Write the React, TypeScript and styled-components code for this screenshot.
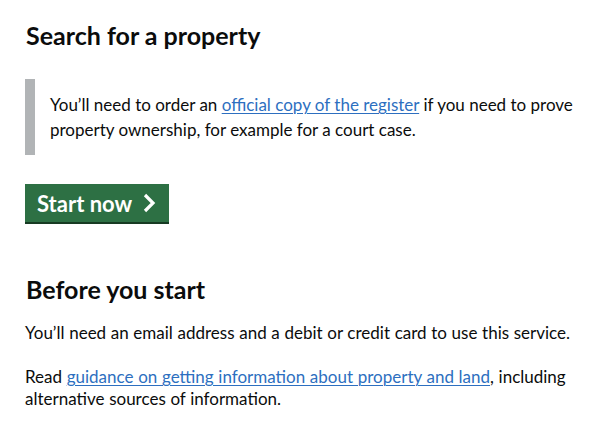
import React from "react";
import styled, { createGlobalStyle } from "styled-components";

const Global = createGlobalStyle`
  html, body { margin: 0; padding: 0; background: #ffffff; }
  body { font-family: Lato, "Noto Sans", Arial, sans-serif; color: #0b0c0c; }
`;

const Page = styled.main`
  padding: 20px 25px 0 25px;
  display: flex;
  flex-direction: column;
  align-items: flex-start;
`;

const Heading = styled.h2<{ $top?: number }>`
  margin: ${(p) => p.$top ?? 0}px 0 0 1px;
  font-size: 25px;
  line-height: 30px;
  font-weight: 700;
`;

const Inset = styled.div`
  margin-top: 29px;
  border-left: 10px solid #b1b4b6;
  padding: 13px 0 13px 15px;
  box-sizing: border-box;
`;

const Text = styled.p<{ $top?: number; $lh?: number; $ws?: number }>`
  margin: ${(p) => p.$top ?? 0}px 0 0 0;
  font-size: 17px;
  line-height: ${(p) => p.$lh ?? 25}px;
  font-weight: 400;
  word-spacing: ${(p) => p.$ws ?? 0}px;
`;

const Link = styled.a`
  color: #2d6fc0;
  text-decoration: underline;
  text-underline-offset: 2px;
  text-decoration-thickness: 1px;
`;

const StartButton = styled.a`
  margin-top: 29px;
  display: inline-flex;
  align-items: center;
  gap: 10px;
  height: 38px;
  padding: 0 13px 0 12px;
  background: #2d7044;
  box-shadow: 0 2px 0 #173b23;
  color: #ffffff;
  font-size: 22px;
  font-weight: 700;
  text-decoration: none;
  box-sizing: border-box;
`;

export default function App() {
  return (
    <>
      <Global />
      <Page>
        <Heading>Search for a property</Heading>
        <Inset>
          <Text>
            You’ll need to order an <Link href="#">official copy of the register</Link> if you need to prove
            property ownership, for example for a court case.
          </Text>
        </Inset>
        <StartButton href="#">
          Start now
          <svg width="14" height="20" viewBox="0 0 14 20" aria-hidden="true">
            <path d="M3 2 L11 10 L3 18" fill="none" stroke="#ffffff" strokeWidth="3.2" />
          </svg>
        </StartButton>
        <Heading $top={52}>Before you start</Heading>
        <Text $top={16} $ws={0.3}>
          You’ll need an email address and a debit or credit card to use this service.
        </Text>
        <Text $top={21} $lh={22} $ws={0.3}>
          Read <Link href="#">guidance on getting information about property and land</Link>, including
          alternative sources of information.
        </Text>
      </Page>
    </>
  );
}
